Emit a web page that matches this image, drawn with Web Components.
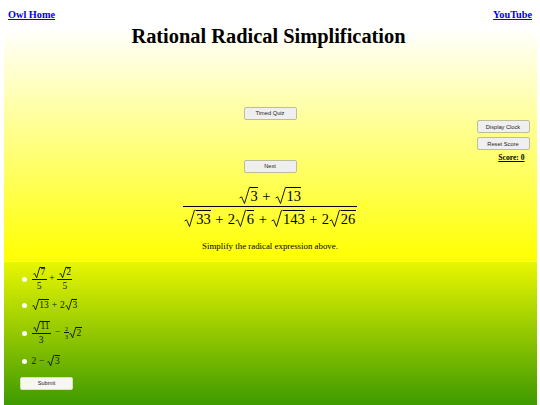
<!DOCTYPE html>
<html lang="en">
<head>
<meta charset="utf-8">
<title>Rational Radical Simplification</title>
<style>
	html, body { margin: 0; padding: 0; background: #fff; }
	body { font-family: "Liberation Serif", serif; }
</style>
</head>
<body>
<quiz-page></quiz-page>

<script>
class QuizButton extends HTMLElement {
	constructor() {
		super();
		this.attachShadow({ mode: 'open' });
		this.shadowRoot.innerHTML = `
			<style>
				:host { display: block; width: 53px; }
				button {
					display: block;
					width: 100%;
					height: 12.5px;
					padding: 0;
					border: 1px solid var(--btn-border, #bdbd9c);
					border-radius: 2px;
					background: var(--btn-bg, #efefef);
					color: #222;
					font: 5.7px "Liberation Sans", sans-serif;
				}
			</style>
			<button type="button"><slot></slot></button>
		`;
	}
}

class MathSqrt extends HTMLElement {
	constructor() {
		super();
		this.attachShadow({ mode: 'open' });
		this.shadowRoot.innerHTML = `
			<style>
				:host { display: inline-flex; align-items: stretch; line-height: 1; }
				svg { display: block; width: .8em; flex: none; overflow: visible; }
				.body { display: block; align-self: baseline; border-top: .055em solid currentColor; padding: .09em .03em 0 .02em; }
			</style>
			<svg viewBox="0 0 20 30" preserveAspectRatio="none" aria-hidden="true">
				<path d="M1 19 L4.5 17 L9.5 28.5 L18 .6 L20 .6" fill="none" stroke="currentColor" stroke-width=".9" vector-effect="non-scaling-stroke"/>
			</svg>
			<span class="body"><slot></slot></span>
		`;
	}
}

class MathOp extends HTMLElement {
	constructor() {
		super();
		this.attachShadow({ mode: 'open' });
		this.shadowRoot.innerHTML = `
			<style>
				:host { display: inline-block; margin: 0 .29em; line-height: 1; }
			</style>
			<slot></slot>
		`;
	}
}

class MathRow extends HTMLElement {
	constructor() {
		super();
		this.attachShadow({ mode: 'open' });
		this.shadowRoot.innerHTML = `
			<style>
				:host { display: inline-flex; align-items: baseline; white-space: nowrap; line-height: 1; }
			</style>
			<slot></slot>
		`;
	}
}

class MathFrac extends HTMLElement {
	constructor() {
		super();
		this.attachShadow({ mode: 'open' });
		this.shadowRoot.innerHTML = `
			<style>
				:host { display: inline-flex; flex-direction: column; align-items: stretch; text-align: center; line-height: 1; }
				.num { display: block; padding: 0 .12em .16em; border-bottom: .055em solid currentColor; }
				.den { display: block; padding: .16em .12em 0; }
			</style>
			<span class="num"><slot name="num"></slot></span>
			<span class="den"><slot name="den"></slot></span>
		`;
	}
}

class QuizOption extends HTMLElement {
	constructor() {
		super();
		this.attachShadow({ mode: 'open' });
		this.shadowRoot.innerHTML = `
			<style>
				:host { display: flex; align-items: center; gap: 5px; height: var(--row, 28px); padding-left: 1.5px; font-size: 9.5px; color: #0b1a00; }
				input {
					appearance: none;
					flex: none;
					width: 5px;
					height: 5px;
					margin: 0;
					border-radius: 50%;
					background: #fff;
				}
				.expr { display: inline-flex; align-items: center; white-space: nowrap; }
			</style>
			<input type="radio" name="answer">
			<span class="expr"><slot></slot></span>
		`;
	}
}

class SidePanel extends HTMLElement {
	constructor() {
		super();
		this.attachShadow({ mode: 'open' });
		this.shadowRoot.innerHTML = `
			<style>
				:host { display: flex; flex-direction: column; gap: 4.5px; width: 53px; padding-right: 7px; }
				.score { font-size: 7.6px; font-weight: bold; text-decoration: underline; color: #000; line-height: 9px; align-self: flex-end; margin-right: 5px; margin-top: -1.5px; }
			</style>
			<quiz-button>Display Clock</quiz-button>
			<quiz-button>Reset Score</quiz-button>
			<span class="score">Score: 0</span>
		`;
	}
}

class QuestionPanel extends HTMLElement {
	constructor() {
		super();
		this.attachShadow({ mode: 'open' });
		this.shadowRoot.innerHTML = `
			<style>
				:host {
					display: grid;
					grid-template-columns: 1fr auto 1fr;
					grid-template-rows: auto auto;
					align-content: start;
					height: 233px;
					margin: 0 3.5px;
					background: linear-gradient(#fff, #ff0);
				}
				h1 {
					grid-column: 1 / -1;
					margin: 0;
					padding-right: 3px;
					height: 79px;
					text-align: center;
					font-size: 20.4px;
					line-height: 17px;
					color: #000;
				}
				.center { grid-column: 2; display: flex; flex-direction: column; align-items: center; }
				.gap { height: 40.5px; flex: none; }
				side-panel { grid-column: 3; justify-self: end; margin-top: 13.3px; }
				.expr { display: flex; justify-content: center; margin-top: 14px; font-size: 14.5px; color: #000; white-space: nowrap; width: 200px; }
				p { margin: 14.5px 0 0; font-size: 8.85px; line-height: 11px; color: #000; white-space: nowrap; }
			</style>
			<h1>Rational Radical Simplification</h1>
			<div class="center">
				<quiz-button>Timed Quiz</quiz-button>
				<div class="gap"></div>
				<quiz-button>Next</quiz-button>
				<div class="expr"><slot name="expression"></slot></div>
				<p>Simplify the radical expression above.</p>
			</div>
			<side-panel></side-panel>
		`;
	}
}

class AnswerPanel extends HTMLElement {
	constructor() {
		super();
		this.attachShadow({ mode: 'open' });
		this.shadowRoot.innerHTML = `
			<style>
				:host {
					display: block;
					box-sizing: border-box;
					height: 144px;
					margin: 0 3.5px;
					padding: 3px 0 0 16.5px;
					border-top: 1px solid #f0f0b0;
					background: linear-gradient(#e8f600, #3e9a00);
				}
			</style>
			<slot></slot>
		`;
	}
}

class QuizPage extends HTMLElement {
	constructor() {
		super();
		this.attachShadow({ mode: 'open' });
		this.shadowRoot.innerHTML = `
			<style>
				:host { display: block; width: 540px; height: 405px; overflow: hidden; }
				header { display: flex; justify-content: space-between; align-items: flex-start; height: 28px; padding: 8.5px 8px 0; box-sizing: border-box; }
				a { color: #00e; font-size: 10.25px; font-weight: bold; line-height: 11px; text-decoration: underline; }
				.submit { margin-top: 2px; --btn-bg: #f6f8f0; --btn-border: #d8e0c0; }
				.row-short { --row: 24px; margin-bottom: 2px; }
				.small { font-size: 6px; }
				.minus { margin: 0 .42em; }
			</style>
			<header>
				<a href="#">Owl Home</a>
				<a href="#">YouTube</a>
			</header>
			<question-panel>
				<math-frac slot="expression">
					<math-row slot="num"><math-sqrt>3</math-sqrt><math-op>+</math-op><math-sqrt>13</math-sqrt></math-row>
					<math-row slot="den"><math-sqrt>33</math-sqrt><math-op>+</math-op>2<math-sqrt>6</math-sqrt><math-op>+</math-op><math-sqrt>143</math-sqrt><math-op>+</math-op>2<math-sqrt>26</math-sqrt></math-row>
				</math-frac>
			</question-panel>
			<answer-panel>
				<quiz-option>
					<math-frac><math-sqrt slot="num">7</math-sqrt><span slot="den">5</span></math-frac><math-op>+</math-op><math-frac><math-sqrt slot="num">2</math-sqrt><span slot="den">5</span></math-frac>
				</quiz-option>
				<quiz-option class="row-short"><math-row><math-sqrt>13</math-sqrt><math-op>+</math-op>2<math-sqrt>3</math-sqrt></math-row></quiz-option>
				<quiz-option>
					<math-frac><math-sqrt slot="num">11</math-sqrt><span slot="den">3</span></math-frac><math-op class="minus">−</math-op><math-frac class="small"><span slot="num">2</span><span slot="den">3</span></math-frac><math-sqrt>2</math-sqrt>
				</quiz-option>
				<quiz-option><math-row>2<math-op>−</math-op><math-sqrt>3</math-sqrt></math-row></quiz-option>
				<quiz-button class="submit">Submit</quiz-button>
			</answer-panel>
		`;
	}
}

customElements.define('quiz-button', QuizButton);
customElements.define('math-sqrt', MathSqrt);
customElements.define('math-op', MathOp);
customElements.define('math-row', MathRow);
customElements.define('math-frac', MathFrac);
customElements.define('quiz-option', QuizOption);
customElements.define('side-panel', SidePanel);
customElements.define('question-panel', QuestionPanel);
customElements.define('answer-panel', AnswerPanel);
customElements.define('quiz-page', QuizPage);
</script>
</body>
</html>
